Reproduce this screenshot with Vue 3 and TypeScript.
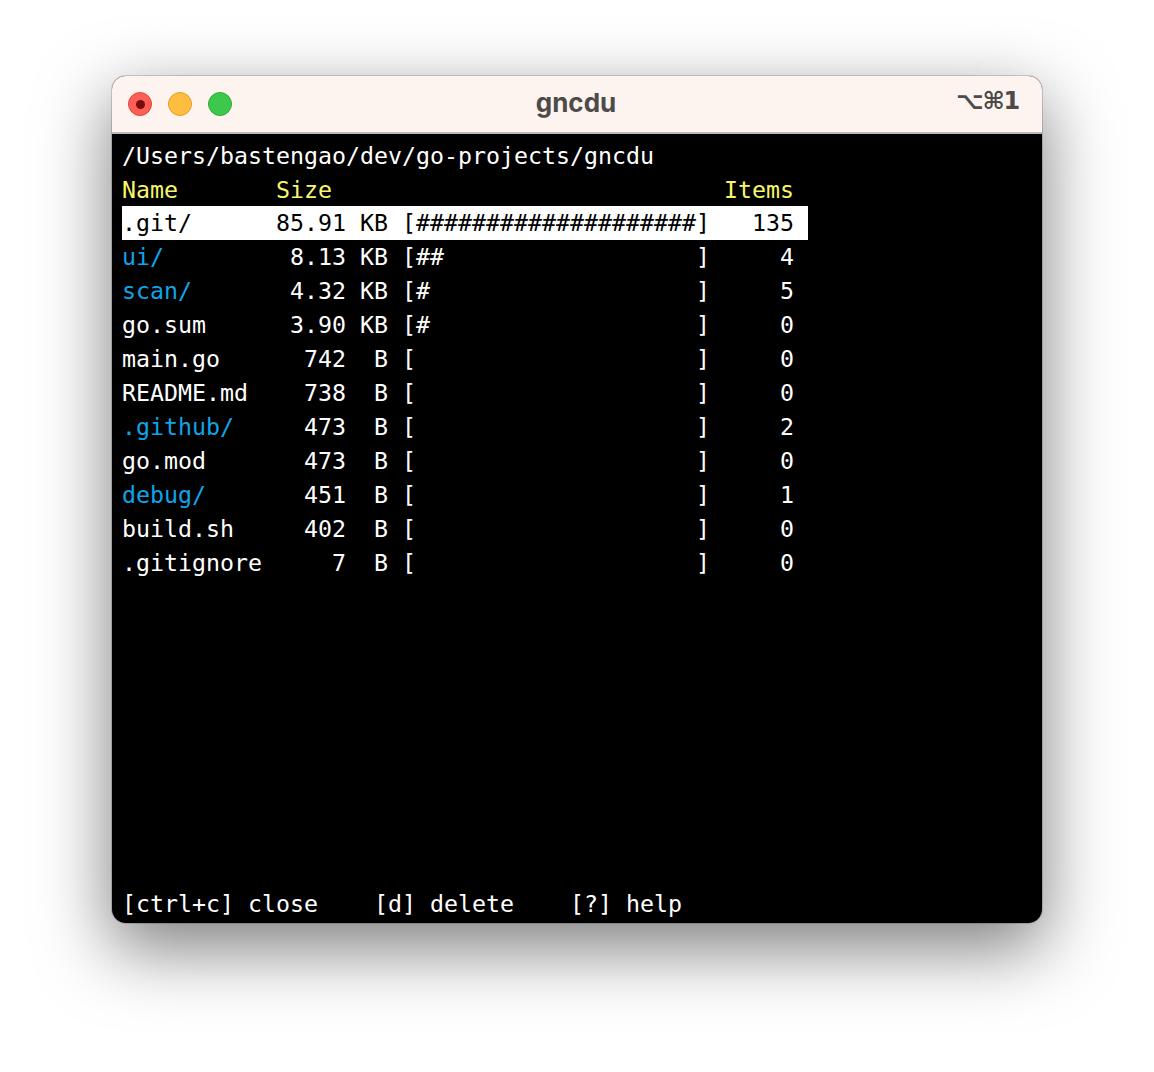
<script setup lang="ts">
interface Entry { name: string; num: string; unit: string; bar: number; items: number; dir: boolean }
const entries: Entry[] = [
  { name: '.git/', num: '85.91', unit: 'KB', bar: 20, items: 135, dir: true },
  { name: 'ui/', num: '8.13', unit: 'KB', bar: 2, items: 4, dir: true },
  { name: 'scan/', num: '4.32', unit: 'KB', bar: 1, items: 5, dir: true },
  { name: 'go.sum', num: '3.90', unit: 'KB', bar: 1, items: 0, dir: false },
  { name: 'main.go', num: '742', unit: 'B', bar: 0, items: 0, dir: false },
  { name: 'README.md', num: '738', unit: 'B', bar: 0, items: 0, dir: false },
  { name: '.github/', num: '473', unit: 'B', bar: 0, items: 2, dir: true },
  { name: 'go.mod', num: '473', unit: 'B', bar: 0, items: 0, dir: false },
  { name: 'debug/', num: '451', unit: 'B', bar: 0, items: 1, dir: true },
  { name: 'build.sh', num: '402', unit: 'B', bar: 0, items: 0, dir: false },
  { name: '.gitignore', num: '7', unit: 'B', bar: 0, items: 0, dir: false },
]
const line = (e: Entry): string =>
  e.num.padStart(16 - e.name.length) + ' ' + e.unit.padStart(2) + ' [' + '#'.repeat(e.bar).padEnd(20) + ']' + String(e.items).padStart(6) + ' '
const header = 'Name'.padEnd(11) + 'Size'.padEnd(32) + 'Items'
const footer = '[ctrl+c] close    [d] delete    [?] help'
</script>

<template>
  <div class="page">
    <div class="window">
      <header class="titlebar">
        <div class="lights">
          <span class="light red"><i></i></span>
          <span class="light yellow"></span>
          <span class="light green"></span>
        </div>
        <span class="title">gncdu</span>
        <span class="shortcut">⌥⌘1</span>
      </header>
      <main class="term">
        <div class="line nudge">/Users/bastengao/dev/go-projects/gncdu</div>
        <div class="line nudge head">{{ header }}</div>
        <div
          v-for="(e, i) in entries"
          :key="e.name"
          class="line row"
          :class="{ selected: i === 0 }"
        ><span :class="{ dir: e.dir && i !== 0 }">{{ e.name }}</span>{{ line(e) }}</div>
        <div class="spacer"></div>
        <div class="line nudge">{{ footer }}</div>
      </main>
    </div>
  </div>
</template>

<style>
html, body { margin: 0; background: #fff; }
</style>

<style scoped>
.page {
  width: 1154px;
  height: 1072px;
  padding: 76px 112px 0;
  box-sizing: border-box;
  overflow: hidden;
}
.window {
  width: 930px;
  height: 847px;
  border-radius: 14px;
  overflow: hidden;
  display: flex;
  flex-direction: column;
  background: #000;
  box-shadow: 0 0 0 1px rgba(0, 0, 0, 0.16), 0 24px 70px 2px rgba(0, 0, 0, 0.5);
}
.titlebar {
  height: 58px;
  flex: none;
  box-sizing: border-box;
  background: #fdf4ef;
  border-bottom: 2px solid #bdb9b6;
  display: flex;
  align-items: center;
  justify-content: space-between;
  padding: 0 23px 0 16px;
  position: relative;
  font-family: Inter, "Liberation Sans", sans-serif;
  color: #4d4a49;
}
.lights { display: flex; gap: 16px; }
.light {
  width: 24px;
  height: 24px;
  border-radius: 50%;
  box-sizing: border-box;
  display: flex;
  align-items: center;
  justify-content: center;
}
.light i { width: 9px; height: 9px; border-radius: 50%; background: #7a0c0c; }
.red { background: #fd5f57; border: 1px solid #e0443e; }
.yellow { background: #febc40; border: 1px solid #dea123; }
.green { background: #3ec84b; border: 1px solid #2dac3a; }
.title {
  position: absolute;
  left: 0;
  right: 2px;
  top: 12px;
  text-align: center;
  font-size: 26px;
  font-weight: 700;
  line-height: 30px;
}
.shortcut {
  font-family: "DejaVu Sans", sans-serif;
  font-size: 24px;
  font-weight: 700;
  letter-spacing: -1.2px;
  margin-top: -6px;
}
.term {
  flex: 1;
  display: flex;
  flex-direction: column;
  padding: 4px 0 3px 10px;
  color: #fff;
  font-family: "DejaVu Sans Mono", monospace;
  font-size: 23.25px;
}
.line {
  height: 34px;
  line-height: 34px;
  white-space: pre;
  width: 686px;
}
.nudge { line-height: 36px; }
.head { color: #f7f56a; }
.dir { color: #10a5e8; }
.selected { background: #fff; color: #000; }
.spacer { flex: 1; }
</style>
